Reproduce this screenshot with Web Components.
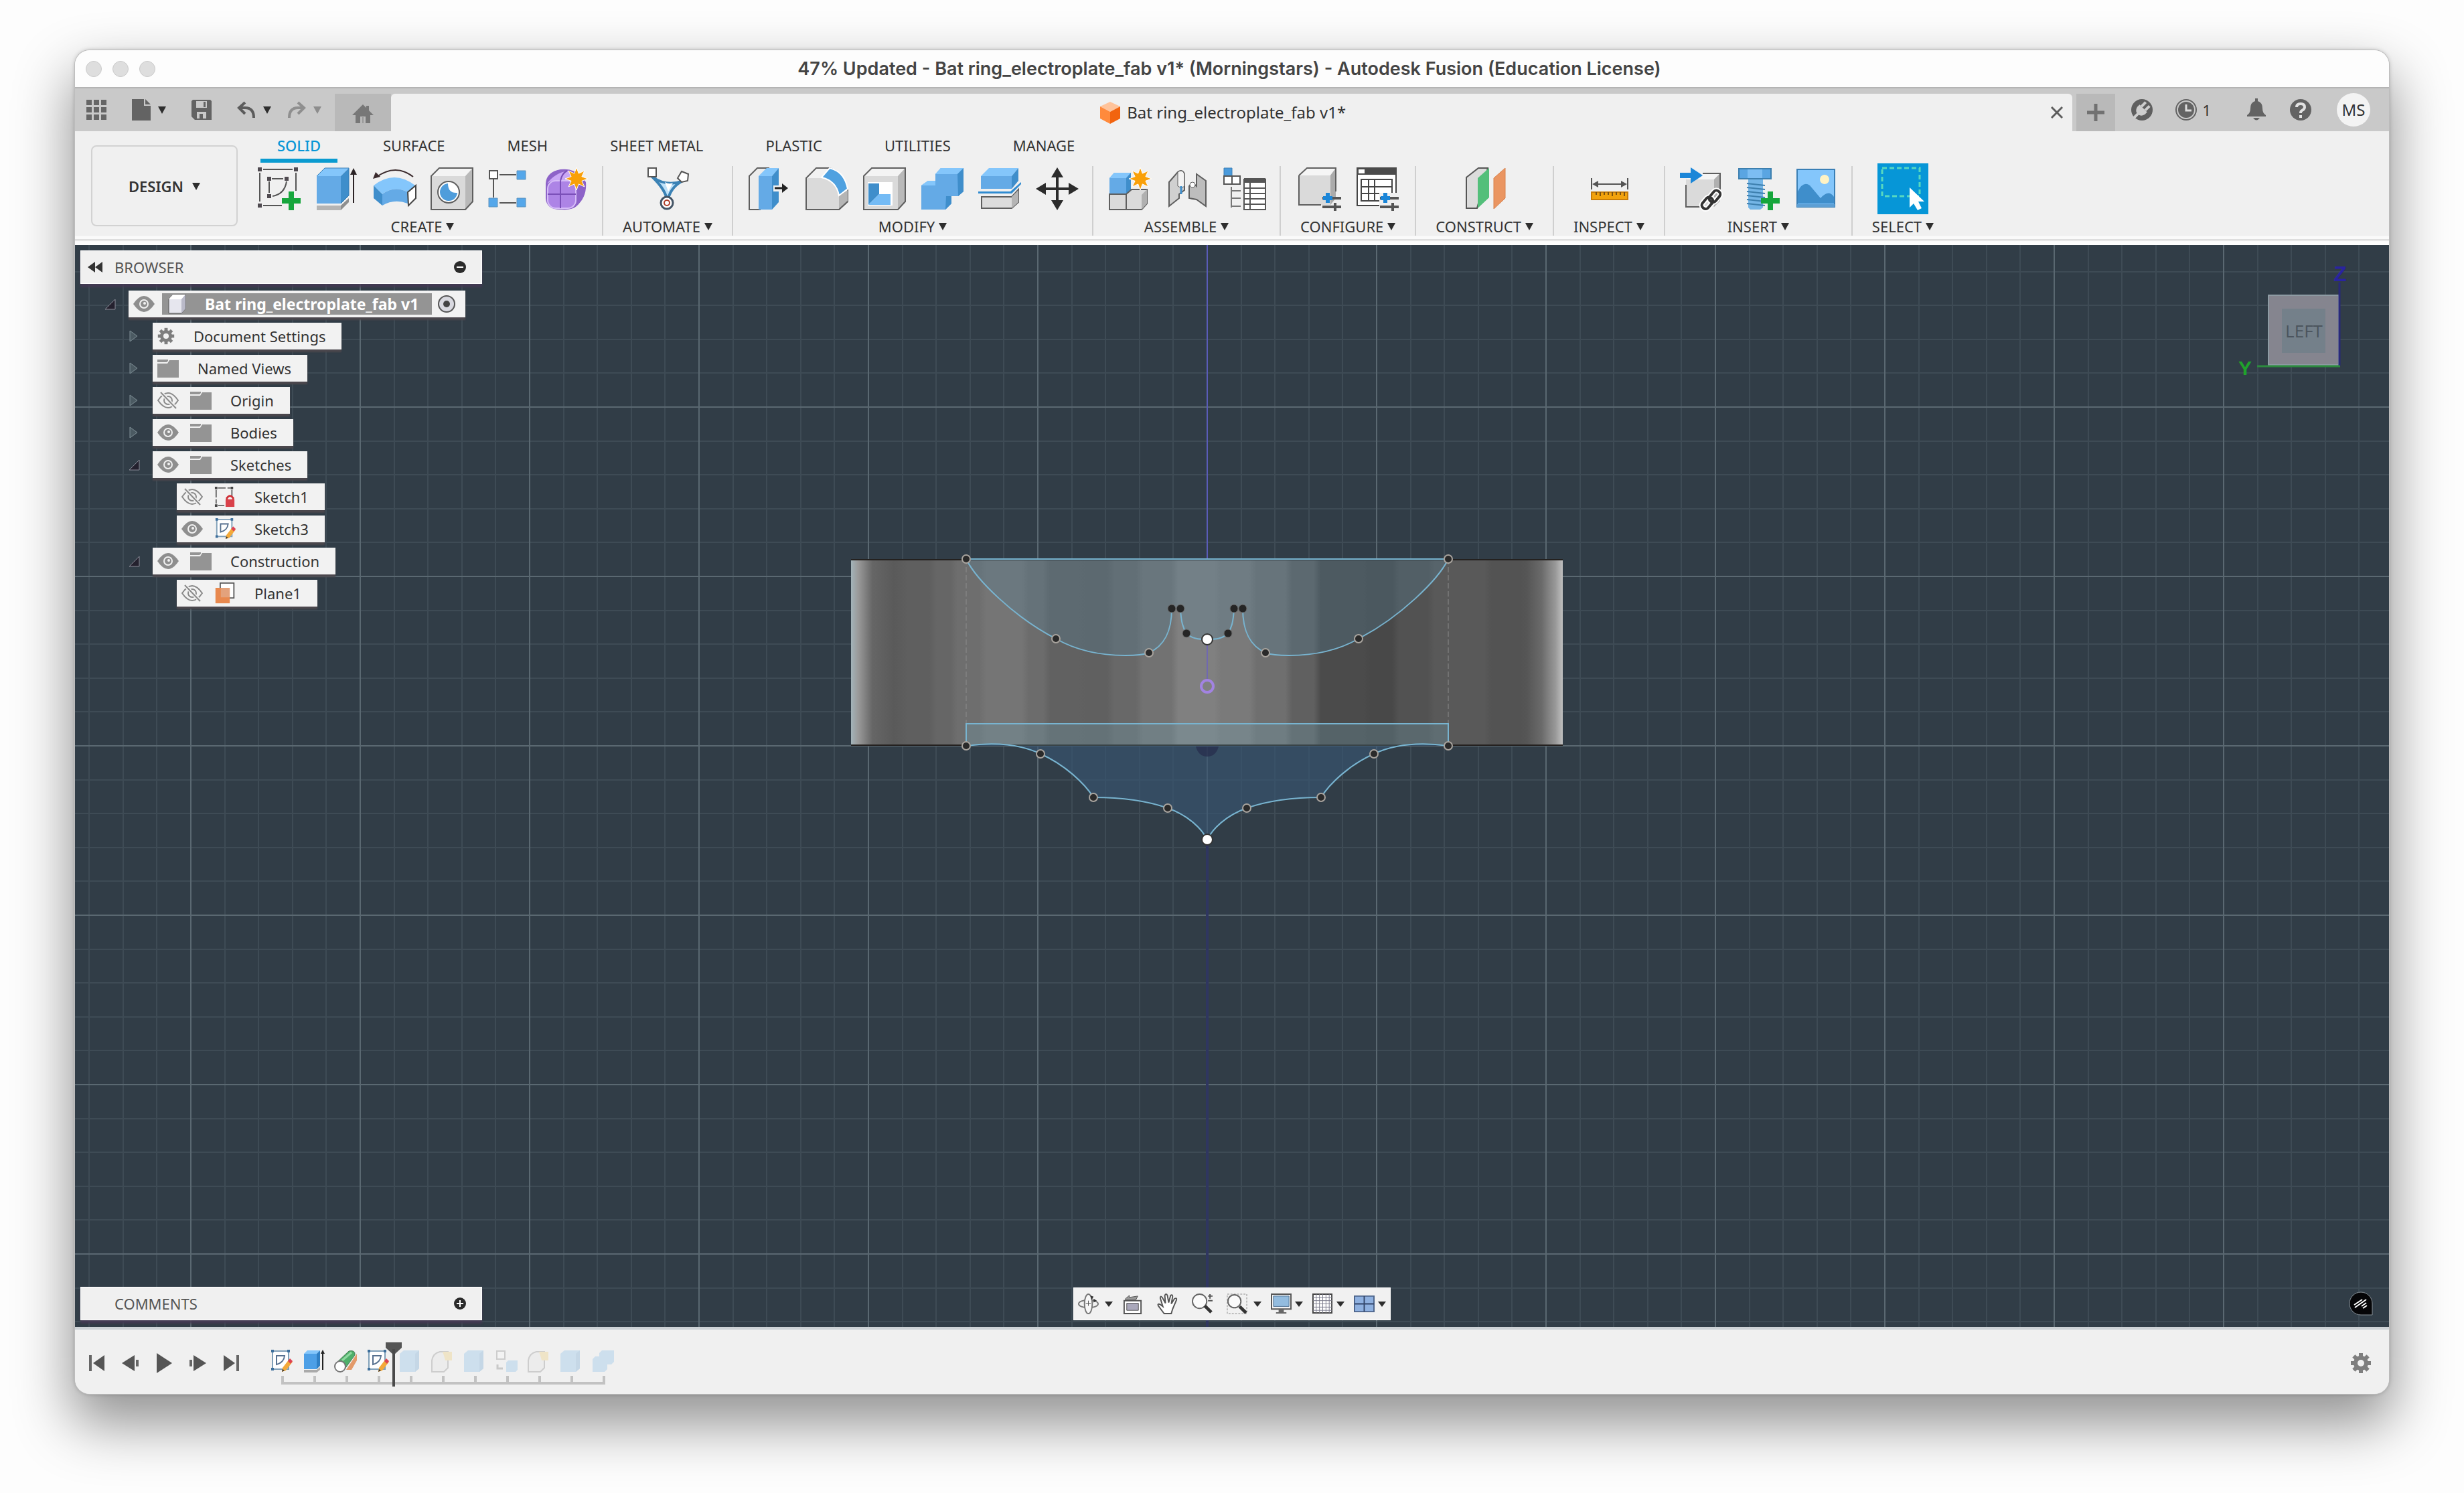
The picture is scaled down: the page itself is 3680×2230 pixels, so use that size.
<!DOCTYPE html>
<html lang="en">
<head>
<meta charset="utf-8">
<title>Autodesk Fusion</title>
<style>
  html, body { margin: 0; }
  body {
    box-sizing: border-box; min-height: 100vh; padding: 75px 112px 148px;
    display: flex; flex-direction: column; background: #fdfdfd; color: #333;
    font: 22px/26px "Noto Sans", "Open Sans", sans-serif;
  }
  fx-window { flex: 1; }
</style>
</head>
<body>
<fx-window>
  <fx-titlebar>47% Updated - Bat ring_electroplate_fab v1* (Morningstars) - Autodesk Fusion (Education License)</fx-titlebar>
  <fx-quickbar>Bat ring_electroplate_fab v1*</fx-quickbar>
  <fx-ribbon></fx-ribbon>
  <fx-viewport>
    <fx-browser slot="top"></fx-browser>
    <fx-viewcube slot="top"></fx-viewcube>
    <fx-panel slot="bottom" icon="plus-dot">COMMENTS</fx-panel>
    <fx-navbar slot="bottom"></fx-navbar>
    <fx-icon slot="bottom" name="badge"></fx-icon>
  </fx-viewport>
  <fx-timeline></fx-timeline>
</fx-window>

<script>
/* Faces of the solid that most ribbon icons share. */
const solid = (front, top, side, line) => `
  <path d="M1 13 13 1H63L52 13Z" fill="${top}"/><path d="M52 13 63 1V51L52 63Z" fill="${side}"/>
  <path d="M1 13H52V63H1Z" fill="${front}"/><path d="M1 13 13 1H63V51L52 63H1Z" fill="none" stroke="${line}" stroke-width="2"/>`;
const GREY = ['#dadada', '#f4f4f4', '#b9b9b9', '#5f5f5f'];
const star = (x, y, r) => {
  let d = '';
  for (let i = 0; i < 16; i++) {
    const a = i * Math.PI / 8, q = i % 2 ? r * .5 : r;
    d += (i ? 'L' : 'M') + (x + q * Math.sin(a)).toFixed(1) + ' ' + (y - q * Math.cos(a)).toFixed(1);
  }
  return `<path d="${d}Z" fill="#f9a009" stroke="#fff" stroke-width="1"/>`;
};
const gear = c => {
  let t = '';
  for (let i = 0; i < 8; i++) t += `<rect x="13" y="1" width="6" height="8" transform="rotate(${i * 45} 16 16)"/>`;
  return `<g fill="${c}">${t}<circle cx="16" cy="16" r="8" fill="none" stroke="${c}" stroke-width="6"/></g>`;
};
const pencilSketch = `
  <path d="M4 2H28V29H4Z" fill="#fff" stroke="#7f9fb8" stroke-width="2"/>
  <g fill="#3d6f9c"><path d="M2 0h4v4H2zM26 0h4v4h-4zM2 27h4v4H2z"/></g>
  <path d="M10 9H22Q21 19 10 22Z" fill="none" stroke="#56708f" stroke-width="2"/>
  <path d="M29 14l5 4-10 13-6 2 1-6Z" fill="#f3a93a"/><path d="M27 17l3-4 4 4-3 4Z" fill="#dd4152"/><path d="M18 33l1-4 3 2Z" fill="#333"/>`;
const sketchFrame = `
  <path d="M8 3H52M3 8V51M57 8V35M8 57H36M21 17H38M17 21V38" stroke="#555" stroke-width="2" fill="none"/>
  <path d="M43 21Q40 40 22 43" stroke="#555" stroke-width="2" fill="none"/>
  <path d="M0 0h6v6H0zM54 0h6v6h-6zM0 54h6v6H0zM14 14h6v6h-6zM40 14h6v6h-6zM14 40h6v6h-6z" fill="#4f4a50"/>`;
const greenPlus = (x, y) => `<path transform="translate(${x} ${y})" d="M-4-14h8v10h10v8H4v10h-8V4h-10v-8h10z" fill="#16a63c"/>`;
const slide = (x, y) => `
  <path d="M${x} ${y + 4}H${x + 28}M${x} ${y + 17}H${x + 28}" stroke="#555" stroke-width="4"/>
  <path d="M${x + 8} ${y - 4}V${y + 11}" stroke="#1b86d8" stroke-width="6"/><path d="M${x + 1} ${y + 4}H${x + 15}" stroke="#1b86d8" stroke-width="6"/>
  <path d="M${x + 19} ${y + 11}V${y + 23}" stroke="#555" stroke-width="4"/>`;

const ICONS = {
  caret: [12, 12, '<path d="M0 1H12L6 12Z" fill="#2e2e2e"/>'],
  'caret-dim': [12, 12, '<path d="M0 1H12L6 12Z" fill="#8d8d8d"/>'],
  'caret-flat': [12, 9, '<path d="M0 1H12L6 9Z" fill="#2e2e2e"/>'],
  grid: [30, 30, '<path fill="#666" d="M0 0h8v8H0zM11 0h8v8h-8zM22 0h8v8h-8zM0 11h8v8H0zM11 11h8v8h-8zM22 11h8v8h-8zM0 22h8v8H0zM11 22h8v8h-8zM22 22h8v8h-8z"/>'],
  file: [28, 32, '<path fill="#636363" d="M0 0H18V10H28V32H0ZM20 0 28 8H20Z"/>'],
  save: [30, 30, '<path fill="#636363" fill-rule="evenodd" d="M2 0H28L30 2V30H5L0 25V2ZM7 2V12H23V2ZM8 18V28H22V18Z"/><path d="M12 21h5v7h-5z" fill="#636363"/><path d="M18 3h3v8h-3z" fill="#636363"/>'],
  undo: [28, 26, '<path d="M12 2 3 10 12 19M3 10H12Q25 10 25 25" fill="none" stroke="#5c5c5c" stroke-width="4"/>'],
  redo: [28, 26, '<path d="M16 2 25 10 16 19M25 10H16Q3 10 3 25" fill="none" stroke="#8f8f8f" stroke-width="4"/>'],
  home: [32, 28, '<path fill="#777" d="M16 0 21 5V2H25V9L32 16H27V28H20V18H12V28H5V16H0Z"/><path d="M15 19h2v9h-2z" fill="#999"/>'],
  doc: [30, 33, '<path d="M15 0 30 7 15 15 0 7Z" fill="#ffc39a"/><path d="M0 7 15 15V33L0 25Z" fill="#ff8a3c"/><path d="M15 15 30 7V25L15 33Z" fill="#f2640f"/>'],
  close: [20, 20, '<path d="M2 2 18 18M18 2 2 18" stroke="#5e5e5e" stroke-width="3"/>'],
  add: [26, 26, '<path d="M13 0V26M0 13H26" stroke="#717171" stroke-width="5"/>'],
  plug: [32, 32, '<circle cx="16" cy="16" r="16" fill="#5f5f5f"/><g transform="rotate(45 16 16)" fill="#cdcdcd"><path d="M8 13H24V18Q22 25 16 25T8 18Z"/><path d="M10 4h4v9h-4zM18 4h4v9h-4zM14 24h4v10h-4z"/></g>'],
  clock: [32, 32, '<circle cx="16" cy="16" r="15" fill="none" stroke="#636363" stroke-width="2"/><circle cx="16" cy="16" r="12" fill="#636363"/><path d="M16 8V17H24" stroke="#ddd" stroke-width="3" fill="none"/>'],
  bell: [28, 34, '<path d="M12 0h4v4Q23 6 23 15Q23 22 28 25V27H0V25Q5 22 5 15Q5 6 12 4Z" fill="#636363"/><path d="M9 29H19Q14 36 9 29Z" fill="#636363"/>'],
  help: [32, 32, '<circle cx="16" cy="16" r="16" fill="#636363"/><path d="M10 12Q10 7 16 7T22 12Q22 15 18 17Q16 18 16 21" fill="none" stroke="#e2e2e2" stroke-width="4"/><path d="M14 24h4v4h-4z" fill="#e2e2e2"/>'],

  sketch: [64, 64, sketchFrame + greenPlus(50, 50)],
  extrude: [64, 64, '<path d="M2 13 14 1H50L38 13Z" fill="#84c6fb"/><path d="M38 13 50 1V42L38 54Z" fill="#3f8ecb"/><path d="M2 13H38V54H2Z" fill="#64aae6"/><path d="M2 13 14 1H50V42L38 54" fill="none" stroke="#3a7fb5" stroke-width="1"/><path d="M2 57H38V64H2Z" fill="#b4b4b4"/><path d="M38 57 50 46V52L38 64Z" fill="#8f8f8f"/><path d="M57 53V8" stroke="#2c2426" stroke-width="2"/><path d="M52 11 57 1 62 11Z" fill="#2c2426"/>'],
  revolve: [64, 64, '<path d="M6 14Q34-6 60 14" fill="none" stroke="#3a2a2c" stroke-width="2"/><path d="M0 17 4 7 11 14Z" fill="#3a2a2c"/><path d="M1 27Q32 3 63 27L52 37Q32 26 14 40Z" fill="#84c6fb"/><path d="M1 27 14 40V57L1 46Z" fill="#3f8ecb"/><path d="M14 40Q32 26 52 37V54Q32 46 14 57Z" fill="#64aae6"/><path d="M52 37 64 27V46L53 57Z" fill="#fff" stroke="#444" stroke-width="2"/>'],
  hole: [64, 64, solid(...GREY) + '<circle cx="27" cy="37" r="16" fill="#fff" stroke="#5f5f5f" stroke-width="2"/><path d="M26 24A13 13 0 1 0 40 38Q26 39 26 24Z" fill="#4f9ddb"/>'],
  pattern: [64, 64, '<path d="M17 11H42M8 18V45M17 53H42" stroke="#555" stroke-width="2"/><path d="M2 5h12v12H2z" fill="#fff" stroke="#555" stroke-width="2"/><g fill="#55a7ea" stroke="#5f93bd"><path d="M43 5h13v13H43zM1 46h13v13H1zM43 46h13v13H43z"/></g>'],
  form: [64, 64, '<path d="M0 24Q1 7 22 3Q46 0 60 22Q62 44 46 58Q40 64 24 63Q1 64 0 46Z" fill="#8d63c8"/><path d="M2 24Q14 8 34 5L46 20H10Z" fill="#c9a7f5"/><rect x="3" y="20" width="42" height="41" rx="12" fill="#ad84e6" stroke="#d6bdf8" stroke-width="2"/><path d="M22 20V61M3 40H45M22 20Q24 9 32 5" stroke="#7a4fb8" stroke-width="2" fill="none"/>' + star(46, 17, 17)],
  automate: [64, 64, '<path d="M8 14Q30 30 54 20Q34 30 31 52Q29 34 8 14Z" fill="#bfe2fa" stroke="#3b82b5" stroke-width="4" stroke-linejoin="round"/><path d="M27 22Q33 26 39 23L32 36Z" fill="#fff"/><path d="M2 1h12v13H2z" fill="#fff" stroke="#555" stroke-width="2"/><path d="M52 6 62 10 61 20 52 22 46 16Z" fill="#fff" stroke="#555" stroke-width="2"/><circle cx="30" cy="53" r="9" fill="#fff" stroke="#456" stroke-width="3"/><circle cx="30" cy="53" r="4" fill="none" stroke="#b0402c" stroke-width="2"/>'],
  press: [64, 64, '<path d="M2 13 14 1H30L18 13V63H2Z" fill="#ececec" stroke="#5f5f5f" stroke-width="2"/><path d="M16 13 28 1H46L36 13Z" fill="#84c6fb"/><path d="M36 13 46 1V52L36 63Z" fill="#3f8ecb"/><path d="M16 13H36V63H16Z" fill="#64aae6"/><path d="M38 27h10v9H38z" fill="#f0f0f0"/><path d="M40 31H56" stroke="#222" stroke-width="3"/><path d="M51 24 60 31 51 38Z" fill="#222"/>'],
  fillet: [64, 64, '<path d="M1 16 16 1H36Q58 8 63 34V51L50 63H1Z" fill="#f2f2f2" stroke="#5f5f5f" stroke-width="2"/><path d="M1 16H24Q46 20 50 42V63H1Z" fill="#dadada"/><path d="M50 42 63 34V51L50 63Z" fill="#b5b5b5"/><path d="M36 1Q58 6 63 32L50 42Q46 20 24 15Z" fill="#4fa1e0" stroke="#fff" stroke-width="2"/><path d="M1 16V63H50L63 51" fill="none" stroke="#5f5f5f" stroke-width="2"/>'],
  shell: [64, 64, solid(...GREY) + '<path d="M7 22H44V57H7Z" fill="#fff"/><path d="M8 24H24V40L8 56Z" fill="#3f8ecb"/><path d="M8 56 24 40H41V56Z" fill="#74bbf5"/>'],
  combine: [64, 64, '<path d="M1 27 11 20H22V10L30 1H64V36L56 43H46V54L37 63H1Z" fill="#64aae6"/><path d="M22 10 30 1H64L55 10ZM1 27 11 20H22V27Z" fill="#84c6fb"/><path d="M55 10 64 1V36L56 43ZM38 43H46V54L37 63Z" fill="#3f8ecb"/>'],
  replace: [64, 64, '<path d="M4 13 16 1H60L50 13Z" fill="#84c6fb"/><path d="M50 13 60 1V20L50 32Z" fill="#3f8ecb"/><path d="M4 13H50V32H4Z" fill="#64aae6"/><path d="M0 36H48L64 22V25L50 39H0Z" fill="#2f8bd0"/><path d="M5 44H50L60 33V52L50 61H5Z" fill="#dcdcdc" stroke="#5f5f5f" stroke-width="2"/><path d="M50 44V61L60 52V34Z" fill="#b5b5b5"/>'],
  move: [64, 64, '<path d="M32 8V56M8 32H56" stroke="#2c2c2c" stroke-width="4"/><path fill="#2c2c2c" d="M32 0 41 15H23ZM32 64 41 49H23ZM0 32 15 23V41ZM64 32 49 23V41Z"/>'],
  component: [64, 64, '<path d="M2 16 9 8H34V33L26 40H2Z" fill="#64aae6"/><path d="M2 16 9 8H34L27 16Z" fill="#84c6fb"/><path d="M27 16 34 8V33L27 40Z" fill="#3f8ecb"/><path d="M2 40H27V63H2ZM27 40 35 33H58V54L50 63H27Z" fill="#dadada" stroke="#5f5f5f" stroke-width="2"/><path d="M50 41 58 33V54L50 63Z" fill="#b0b0b0"/>' + star(48, 17, 17)],
  joint: [64, 64, '<path d="M5 22 18 7Q25 2 28 10V34L20 40V46L5 58Z" fill="#d0d0d0" stroke="#5f5f5f" stroke-width="2"/><path d="M18 7Q25 2 28 10V28Q24 32 18 28Z" fill="#f3f3f3" stroke="#5f5f5f"/><path d="M23 28V40" stroke="#3f8ecb" stroke-width="3"/><path d="M46 10 60 20V58L46 48L35 46V28Q40 22 46 28Z" fill="#bdbdbd" stroke="#5f5f5f" stroke-width="2"/><circle cx="40" cy="26" r="4" fill="#fff" stroke="#5f5f5f"/>'],
  bom: [64, 64, '<path d="M1 1h12v12H1z" fill="#4b9bdc" stroke="#3a7fb5"/><path d="M1 13h12v12H1zM13 13h12v12H13z" fill="#fff" stroke="#555" stroke-width="2"/><path d="M12 29V60M12 35H26M12 46H26M12 58H26" stroke="#777" stroke-width="2"/><path d="M31 18H63V63H31Z" fill="#fff" stroke="#555" stroke-width="2"/><path d="M31 16h32v7H31z" fill="#555"/><path d="M31 31H63M31 39H63M31 47H63M31 55H63M40 23V63" stroke="#555" stroke-width="2"/>'],
  config: [64, 64, '<path d="M1 12 13 1H56V46L48 56H1Z" fill="#dadada"/><path d="M1 12 13 1H56L48 12Z" fill="#f5f5f5"/><path d="M48 12 56 1V46L48 56Z" fill="#ababab"/><path d="M1 12 13 1H56V36M1 12V56H34" fill="none" stroke="#5f5f5f" stroke-width="2"/>' + slide(36, 42)],
  configTable: [64, 64, '<path d="M2 1H60V57H2Z" fill="#fff" stroke="#444" stroke-width="2"/><path d="M1 0h60v11H1z" fill="#4a4a4a"/><path d="M4 3h9v6H4z" fill="#fff"/><path d="M8 18H54V50H8ZM8 29H54M8 39H54M19 18V50M28 18V50" fill="none" stroke="#444" stroke-width="2"/><path d="M35 38h29v26H35z" fill="#f0f0f0"/>' + slide(36, 42)],
  plane: [64, 64, '<path d="M4 15 22 1H36L20 61H4Z" fill="#dcdcdc" stroke="#555" stroke-width="2"/><path d="M21 16 38 1V45L21 61Z" fill="#53bf7a"/><path d="M45 16 62 1V46L45 62Z" fill="#ea9561" stroke="#d8804b"/>'],
  measure: [64, 64, '<path d="M5 16V33M59 16V33M8 25H56" stroke="#555" stroke-width="2"/><path d="M6 25 15 20V30ZM58 25 49 20V30Z" fill="#555"/><path d="M5 37h54v11H5z" fill="#f2a20c" stroke="#c87d08" stroke-width="2"/><path d="M12 37v4M18 37v6M24 37v4M30 37v4M36 37v6M42 37v4M48 37v4M54 37v6" stroke="#7c5210" stroke-width="2"/>'],
  derive: [64, 64, '<path d="M9 18 18 9H60V50L51 59H9Z" fill="#dadada"/><path d="M9 18 18 9H60L51 18Z" fill="#f5f5f5"/><path d="M51 18 60 9V50L51 59Z" fill="#b0b0b0"/><path d="M9 26V59H32M34 9H60V38" fill="none" stroke="#5f5f5f" stroke-width="2"/><path d="M0 8H16V0L34 12 16 24V16H0Z" fill="#1b86d8"/><g fill="none" stroke="#fff" stroke-width="8"><rect x="32" y="48" width="19" height="11" rx="5" transform="rotate(-50 41 54)"/><rect x="43" y="38" width="19" height="11" rx="5" transform="rotate(-50 52 44)"/></g><g fill="none" stroke="#333" stroke-width="4"><rect x="32" y="48" width="19" height="11" rx="5" transform="rotate(-50 41 54)"/><rect x="43" y="38" width="19" height="11" rx="5" transform="rotate(-50 52 44)"/></g>'],
  screw: [64, 64, '<path d="M16 16H38V60L34 63H19L16 60Z" fill="#74b5e6"/><path d="M14 24 41 27M14 30 41 33M14 36 41 39M14 42 41 45M14 48 41 51M14 54 41 57" stroke="#3d7fae" stroke-width="2"/><path d="M2 2H50V17H2Z" fill="#5aa5e2" stroke="#3d7fae" stroke-width="2"/><path d="M15 3h22v13H15z" fill="#7cbdf2"/>' + greenPlus(49, 50)],
  image: [64, 64, '<path d="M3 3H59V59H3Z" fill="#84c6fb" stroke="#3a7fb5" stroke-width="2"/><circle cx="44" cy="18" r="7" fill="#fff3c4"/><path d="M4 36Q12 20 22 27L38 46Q50 32 58 44V54H4Z" fill="#3f8ecb"/><path d="M3 55h56v4H3z" fill="#5d9fd4"/>'],
  select: [64, 64, '<path d="M1 1H57V43H1Z" fill="none" stroke="#57d8c0" stroke-width="3" stroke-dasharray="7 4"/><path d="M42 30V60L48 54 54 64 60 61 55 51H64Z" fill="#fff"/>'],

  collapse: [22, 16, '<path d="M0 8 11 0V16ZM11 8 22 0V16Z" fill="#333"/>'],
  'minus-dot': [20, 20, '<circle cx="10" cy="10" r="9" fill="#2b2b2b"/><path d="M5 10H15" stroke="#fff" stroke-width="2"/>'],
  'plus-dot': [20, 20, '<circle cx="10" cy="10" r="9" fill="#2b2b2b"/><path d="M5 10H15M10 5V15" stroke="#fff" stroke-width="2"/>'],
  open: [18, 18, '<path d="M1 17H16V2Z" fill="#24212e" stroke="#8c8c98" stroke-width="1"/>'],
  shut: [18, 18, '<path d="M2 1V17L13 9Z" fill="#4b5a62" stroke="#7f8f96" stroke-width="1"/>'],
  eye: [32, 26, '<path d="M0 13Q16-11 32 13Q16 37 0 13Z" fill="#8e8e8e"/><circle cx="16" cy="13" r="6" fill="none" stroke="#f2f2f2" stroke-width="2"/><circle cx="17" cy="12" r="2" fill="#f2f2f2"/>'],
  'eye-off': [32, 26, '<path d="M1 13Q16-9 31 13Q16 35 1 13Z" fill="none" stroke="#8a8a8a" stroke-width="2"/><circle cx="16" cy="13" r="6" fill="none" stroke="#8a8a8a" stroke-width="2"/><path d="M5 1 28 25" stroke="#f0f0f0" stroke-width="5"/><path d="M5 1 28 25" stroke="#8a8a8a" stroke-width="2"/>'],
  folder: [32, 28, '<path d="M0 1H16V3L14 5H0ZM0 7H15L18 2H32V28H0Z" fill="#949494"/>'],
  gear: [32, 32, gear('#7e7e7e')],
  body: [28, 30, '<path d="M2 8 8 1H27V22L21 29H2Z" fill="#e6e6ee" stroke="#555" stroke-width="1"/><path d="M2 8 8 1H27L21 8Z" fill="#fff"/><path d="M21 8 27 1V22L21 29Z" fill="#b9b9c8"/>'],
  radio: [26, 26, '<circle cx="13" cy="13" r="12" fill="#d9d9e0" stroke="#555" stroke-width="2"/><circle cx="13" cy="13" r="5" fill="#444"/>'],
  locked: [34, 34, '<path d="M6 3H26M3 6V28M28 6V16M6 31H16" stroke="#666" stroke-width="2" stroke-dasharray="12 3"/><path d="M1 1h4v4H1zM26 1h4v4h-4zM1 29h4v4H1z" fill="#444"/><path d="M20 22V19Q25 12 30 19V22" fill="none" stroke="#cf2f36" stroke-width="3"/><path d="M18 21h14v12H18z" fill="#d9414a"/>'],
  pencil: [34, 34, pencilSketch],
  planeItem: [34, 36, '<path d="M9 1H32V26H9Z" fill="#fff" stroke="#555" stroke-width="2"/><path d="M1 9H25V35H1Z" fill="#e8884e"/><path d="M10 9H25V25H10Z" fill="#e3a27c"/>'],

  orbit: [32, 32, '<ellipse cx="16" cy="16" rx="15" ry="6" fill="none" stroke="#777" stroke-width="2"/><ellipse cx="16" cy="16" rx="6" ry="15" fill="#f7f7f7" stroke="#777" stroke-width="2"/><path d="M12 15H20M16 11V19" stroke="#555" stroke-width="1"/><path d="M19 3l5 2-3 5zM24 8l5 3-5 3z" fill="#333"/>'],
  look: [30, 32, '<path d="M2 11H28V31H2Z" fill="#fff" stroke="#555" stroke-width="2"/><path d="M6 15H24V26H6Z" fill="#aaa8bb" stroke="#555"/><path d="M4 8 10 3V6L23 4 20 10H4Z" fill="#999" stroke="#555"/>'],
  pan: [32, 32, '<path d="M11 31 2 19Q0 15 5 17L9 20 5 7Q5 3 8 6L13 15 12 3Q14-1 16 3L18 14 21 3Q24 1 24 5L22 16 27 8Q31 6 30 10L24 24 22 31Z" fill="#fff" stroke="#555" stroke-width="2"/>'],
  zoom: [32, 32, '<circle cx="12" cy="12" r="11" fill="#fafafa" stroke="#666" stroke-width="2"/><path d="M20 19 30 29" stroke="#333" stroke-width="5"/><path d="M25 4H32M28 1V8M25 11H32" stroke="#555" stroke-width="2"/>'],
  fit: [32, 32, '<path d="M1 1H31V31H1Z" fill="none" stroke="#888" stroke-width="1" stroke-dasharray="3 2"/><circle cx="12" cy="12" r="10" fill="#fafafa" stroke="#666" stroke-width="2"/><path d="M20 20 30 30" stroke="#333" stroke-width="5"/>'],
  display: [32, 32, '<path d="M1 1H31V24H1Z" fill="#f4f4f4" stroke="#555" stroke-width="2"/><path d="M4 4H28V20H4Z" fill="#93bcdf" stroke="#4c6f90"/><path d="M12 25h8v4h-8zM8 29h16v2H8z" fill="#666"/>'],
  gridview: [32, 32, '<path d="M1 1H30V30H1Z" fill="#fff" stroke="#444" stroke-width="2"/><path d="M1 6H30M1 11H30M1 16H30M1 21H30M1 26H30M6 1V30M11 1V30M16 1V30M21 1V30M26 1V30" stroke="#7c7c8c" stroke-width="1"/>'],
  views: [32, 32, '<path d="M1 4H31V28H1Z" fill="#8fb1e0" stroke="#4d648a" stroke-width="2"/><path d="M16 4V28M1 16H31" stroke="#33476b" stroke-width="2"/>'],
  badge: [36, 36, '<path d="M18 1A17 17 0 1 0 18 35H35V18A17 17 0 0 0 18 1Z" fill="#050507" stroke="#8a939a" stroke-width="1"/><path d="M8 20 20 12M9 24 26 12M19 22 26 17M21 25 27 21" stroke="#fff" stroke-width="2"/>'],

  first: [28, 30, '<path d="M4 3V27" stroke="#666" stroke-width="4"/><path d="M25 3V27L8 15Z" fill="#555"/>'],
  prev: [28, 30, '<path d="M20 3V27L1 15Z" fill="#555"/><path d="M24 10V20" stroke="#666" stroke-width="4"/>'],
  play: [28, 30, '<path d="M3 0V30L26 15Z" fill="#555"/>'],
  next: [28, 30, '<path d="M8 3V27L27 15Z" fill="#555"/><path d="M4 10V20" stroke="#666" stroke-width="4"/>'],
  last: [28, 30, '<path d="M24 3V27" stroke="#666" stroke-width="4"/><path d="M3 3V27L20 15Z" fill="#555"/>'],
  tExtrude: [34, 34, '<path d="M3 6 8 1H27L22 6Z" fill="#84c6fb"/><path d="M22 6 27 1V24L22 29Z" fill="#2f7fc4"/><path d="M3 6H22V29H3Z" fill="#4d9fe6"/><path d="M3 30H22L27 26V30L22 34H3Z" fill="#aaa"/><path d="M31 30V4" stroke="#222" stroke-width="2"/><path d="M28 6 31 0 34 6Z" fill="#222"/>'],
  tTube: [34, 34, '<path d="M18 30 34 6V16L26 30Z" fill="#e39a6a"/><path d="M3 20 22 2Q32 0 31 8L15 30Z" fill="#4fb06a" stroke="#4b7a56"/><path d="M12 16 26 4" stroke="#8fd8a0" stroke-width="3"/><circle cx="9" cy="25" r="8" fill="#fff" stroke="#777" stroke-width="2"/>'],
  tBlue: [34, 34, '<path d="M2 6 8 1H31V28L25 33H2Z" fill="#55a7e6"/><path d="M25 6 31 1V28L25 33Z" fill="#3283c4"/>'],
  tFillet: [34, 34, '<path d="M2 16Q4 5 14 3H26V27L20 33H2Z" fill="#e0e0e0" stroke="#555" stroke-width="2"/><path d="M18 3H32V16H22Q20 8 18 3Z" fill="#efbd3a"/>'],
  tPattern: [34, 34, '<path d="M3 2h12v12H3z" fill="#fff" stroke="#555" stroke-width="2"/><path d="M4 22V28H12" fill="none" stroke="#444" stroke-width="3"/><path d="M17 19 20 16H34V30L31 33H17Z" fill="#55a7e6"/>'],
  tCombine: [34, 34, '<path d="M2 14 6 10H12V5L16 1H34V18L30 22H24V29L20 33H2Z" fill="#55a7e6"/>'],
  marker: [26, 66, '<path d="M1 0H25V8L13 19 1 8Z" fill="#555"/><path d="M13 10V66" stroke="#4a4a4a" stroke-width="4"/>']
};

/* Base class: fills an open shadow root from styles() and render(). */
class FxElement extends HTMLElement {
  connectedCallback() {
    if (this.shadowRoot) return;
    const t = document.createElement('template');
    t.innerHTML = `<style>
      :host { display: block; box-sizing: border-box; }
      *, *::before { box-sizing: border-box; }
      button { font: inherit; color: inherit; background: none; border: 0; padding: 0; margin: 0; display: flex; align-items: center; }
      ul, ol { list-style: none; margin: 0; padding: 0; }
      ${this.styles()}</style>${this.render()}`;
    this.attachShadow({ mode: 'open' }).append(t.content.cloneNode(true));
  }
  styles() { return ''; }
  render() { return '<slot></slot>'; }
}
const icon = (name, w, h) => `<fx-icon name="${name}" ${w ? `w="${w}"` : ''} ${h ? `h="${h}"` : ''}></fx-icon>`;
const iconButton = (name, label, w, h) => `<button aria-label="${label}">${icon(name, w, h)}</button>`;

customElements.define('fx-icon', class extends FxElement {
  styles() { return ':host{display:block;flex:none} svg{display:block;overflow:visible}'; }
  render() {
    const [w, h, body] = ICONS[this.getAttribute('name')];
    return `<svg aria-hidden="true" viewBox="0 0 ${w} ${h}" width="${this.getAttribute('w') || w}" height="${this.getAttribute('h') || h}">${body}</svg>`;
  }
});

customElements.define('fx-window', class extends FxElement {
  styles() { return `:host{display:flex;flex-direction:column;border-radius:22px;overflow:hidden;background:#f0f0f0;
    box-shadow:0 0 0 1px #bdbdbd,0 0 6px rgba(0,0,0,.25),0 40px 84px 6px rgba(0,0,0,.42)}
    ::slotted(fx-viewport){flex:1}`; }
});

customElements.define('fx-titlebar', class extends FxElement {
  styles() { return `:host{display:grid;grid-template-columns:1fr auto 1fr;align-items:center;height:57px;padding:0 24px 0 16px;background:#fdfdfd;border-bottom:2px solid #b4b4b4;
    font:600 27px/30px Inter,"Liberation Sans",sans-serif;color:#444}
    .dots{display:flex;gap:16px}.dots i{width:24px;height:24px;border-radius:50%;background:#dedede;border:1px solid #c9c9c9}`; }
  render() { return '<div class="dots"><i></i><i></i><i></i></div><div><slot></slot></div>'; }
});

customElements.define('fx-quickbar', class extends FxElement {
  styles() { return `:host{display:flex;height:64px;background:#c9c9c9}
    .quick{display:flex;align-items:center;padding:0 14px 0 17px;width:388px}
    .quick button+button{margin-left:11px}
    .quick .wide{margin-left:38px}
    .quick .redo{margin-left:24px}
    .home{width:84px;margin-top:8px;padding-top:4px;justify-content:center;background:#b9b9b9}
    .tab{flex:1;display:flex;align-items:center;margin-top:8px;padding:0 13px 0 7px;border-radius:6px 6px 0 0;background:#f0f0f0;font-size:24px}
    .tab span{flex:1;display:flex;justify-content:center;align-items:center;gap:10px}
    .new{width:58px;margin:8px 0 0 6px;justify-content:center;background:#b9b9b9}
    .account{display:flex;align-items:center;padding:0 28px 0 24px}
    .jobs{margin-left:34px;gap:8px}.bell{margin-left:54px}.help{margin-left:36px}
    .me{margin-left:38px;width:50px;height:50px;border-radius:50%;background:#f3f3f3;justify-content:center;font-size:24px}`; }
  render() { return `
    <div class="quick">${iconButton('grid', 'Data panel')}
      <button class="wide" aria-label="File">${icon('file')}</button>${iconButton('caret', 'File menu')}
      <button class="wide" aria-label="Save">${icon('save')}</button>
      <button class="wide" aria-label="Undo">${icon('undo')}</button>${iconButton('caret', 'Undo history')}
      <button class="redo" aria-label="Redo">${icon('redo')}</button>${iconButton('caret-dim', 'Redo history')}
    </div>
    <button class="home" aria-label="Home">${icon('home')}</button>
    <div class="tab"><span>${icon('doc')}<slot></slot></span>${iconButton('close', 'Close tab')}</div>
    <button class="new" aria-label="New tab">${icon('add')}</button>
    <div class="account">${iconButton('plug', 'Extensions')}
      <button class="jobs" aria-label="Job status">${icon('clock')}1</button>
      <button class="bell" aria-label="Notifications">${icon('bell')}</button>
      <button class="help" aria-label="Help">${icon('help')}</button>
      <button class="me">MS</button></div>`; }
});

customElements.define('fx-tool-group', class extends FxElement {
  styles() { return `:host{display:flex;flex-direction:column;align-items:center;height:104px;padding-top:2px;border-right:2px solid #cfcfcf}
    :host([last]){border:0}
    .icons{display:flex;gap:22px;padding:0 20px 0 22px;margin-bottom:11px}
    :host([last]) .icons{padding:0;background:#0696d7;box-shadow:0 0 0 6px #0696d7}
    .label{gap:6px;padding:0 29px}`; }
  render() { return `<div class="icons">${this.getAttribute('icons').split(' ').map(n => iconButton(n, n, 64, 64)).join('')}</div>
    <button class="label"><slot></slot>${icon('caret')}</button>`; }
});

customElements.define('fx-ribbon', class extends FxElement {
  styles() { return `:host{display:flex;height:170px;background:linear-gradient(#f0f0f0 156px,#fafafa 157px,#fafafa 161px,#c8c8c8 162px,#fafafa 164px,#fff)}
    .design{width:219px;height:121px;margin:21px 0 0 24px;justify-content:center;gap:13px;border:2px solid #d2d2d2;border-radius:8px;font-weight:600}
    nav{display:flex;height:47px;gap:43px;padding-left:34px}
    nav button{justify-content:center;padding:1px 25px 0;border-bottom:6px solid transparent}
    nav button.on{color:#0696d7;border-color:#0a9bd0;font-weight:500}
    .groups{display:flex;margin-top:5px}
    .first{padding-left:8px}`; }
  render() {
    const tabs = ['SOLID', 'SURFACE', 'MESH', 'SHEET METAL', 'PLASTIC', 'UTILITIES', 'MANAGE'];
    const groups = [['CREATE', 'sketch extrude revolve hole pattern form'], ['AUTOMATE', 'automate'],
      ['MODIFY', 'press fillet shell combine replace move'], ['ASSEMBLE', 'component joint bom'],
      ['CONFIGURE', 'config configTable'], ['CONSTRUCT', 'plane'], ['INSPECT', 'measure'],
      ['INSERT', 'derive screw image'], ['SELECT', 'select']];
    return `<button class="design">DESIGN ${icon('caret')}</button>
      <div><nav>${tabs.map((t, i) => `<button${i ? '' : ' class="on"'}>${t}</button>`).join('')}</nav>
      <div class="groups">${groups.map(([t, n], i) => `<fx-tool-group icons="${n}"${i ? '' : ' class="first"'}${i === 8 ? ' last' : ''}>${t}</fx-tool-group>`).join('')}</div></div>`;
  }
});

customElements.define('fx-viewport', class extends FxElement {
  styles() { return `:host{position:relative;display:flex;flex-direction:column;justify-content:space-between;background:#313d47;overflow:hidden}
    .scene{position:absolute;inset:0;width:100%;height:100%}
    .top,.bottom{position:relative;display:flex;justify-content:space-between;padding:8px 58px 0 8px}
    .bottom{display:grid;grid-template-columns:1fr auto 1fr;align-items:center;padding:0 8px 10px}
    ::slotted(fx-icon){justify-self:end;margin-right:16px}`; }
  render() {
    /* Edges blend; the middle of the cylinder is faceted, so each colour holds until just before the next. */
    const edge = [[0, '#a3b3b9'], [1, '#9a9a9a'], [3, '#666'], [6, '#5a5a5a']];
    const facets = [[8, '#5f5f5f'], [12, '#666'], [15, '#6e6e6e'], [19, '#757575'], [25, '#6c6c6c'], [28, '#616161'], [33, '#606060'], [37, '#686868'], [41, '#727272'], [46, '#808080'], [52, '#7a7a7a'], [57, '#6f6f6f'], [62, '#606060'], [66, '#4b4b4b'], [73, '#484848'], [77, '#525252'], [82, '#595959'], [90, '#535353']];
    const rim = [[95, '#565656'], [97, '#6a6a6a'], [99, '#999'], [100, '#c0c0c0']];
    const held = facets.flatMap(([o, c], i) => [[o, c], [(facets[i + 1] || [95])[0] - 1, c]]);
    const stops = [...edge, ...held, ...rim];
    const minor = [51, 101, 152, 202].map(v => `M${v} 0V253M0 ${v}H253`).join('');
    const nodes = [[1443, 835], [1577, 954], [1716, 975], [1443, 1114], [1554, 1126], [1633, 1191], [1744, 1207]];
    const small = [[1750, 909], [1763, 909], [1772, 946]];
    const both = (list, r, extra) => list.flatMap(([x, y]) => [x, 3606 - x].map(v => `<circle cx="${v}" cy="${y}" r="${r}" ${extra}/>`)).join('');
    const upper = 'M1443 835C1458 866 1515 922 1577 954C1610 973 1645 979 1681 979C1697 979 1708 978 1716 975C1738 965 1750 945 1750 909';
    const inner = '1763 909C1764 930 1767 938 1772 946C1780 954 1790 955 1803 955';
    const lower = 'M1443 1114C1480 1109 1520 1110 1554 1126C1590 1142 1620 1170 1633 1191C1670 1191 1710 1195 1744 1207C1775 1218 1795 1238 1803 1254';
    return `<svg class="scene" viewBox="112 366 3456 1616" preserveAspectRatio="xMidYMid slice" role="img" aria-label="Model canvas">
      <defs>
        <pattern id="grid" x="1803" y="861" width="253" height="253" patternUnits="userSpaceOnUse">
          <path d="${minor}" stroke="#3e4b55" stroke-width="2"/>
          <path d="M0 0H253M0 0V253M253 0V253M0 253H253" stroke="#5a6871" stroke-width="2"/></pattern>
        <linearGradient id="metal">${stops.map(([o, c]) => `<stop offset="${o}%" stop-color="${c}"/>`).join('')}</linearGradient>
      </defs>
      <rect x="112" y="366" width="3456" height="1616" fill="url(#grid)"/>
      <path d="M1803 1254V1982" stroke="#2f3660" stroke-width="4"/>
      <path d="M1803 366V835" stroke="#5a5cb8" stroke-width="2"/>
      <rect x="1271" y="835" width="1063" height="279" fill="url(#metal)"/>
      <path d="M1271 836H2334M1271 1113H2334" stroke="#24211f" stroke-width="2"/>
      <g id="side">
        <path d="${upper}L${inner}V835Z" fill="#52809a" fill-opacity=".28"/>
        <path d="M1443 1081H1803V1114H1443Z" fill="#6fa0b4" fill-opacity=".28"/>
        <path d="${lower}V1114Z" fill="#385472" fill-opacity=".65"/>
        <path d="M1443 835V1081" stroke="#8b8b8b" stroke-width="1" stroke-dasharray="8 4"/>
        <path d="${upper}M${inner}${lower}M1443 1114V1081H1803M1443 835H1803" fill="none" stroke="#78b4d0" stroke-width="2"/>
      </g>
      <use href="#side" transform="translate(3606 0) scale(-1 1)"/>
      <path d="M1786 1115Q1790 1130 1803 1130T1820 1115Z" fill="#262c4c" opacity=".7"/>
      <path d="M1803 955V1015" stroke="#7068b0" stroke-width="2"/>
      ${both(nodes, 6, 'fill="#2a2a2a" stroke="#a9a49e" stroke-width="2"')}
      ${both(small, 6, 'fill="#252525" stroke="#6a6a6a" stroke-width="1"')}
      <circle cx="1803" cy="1025" r="9" fill="none" stroke="#a283e2" stroke-width="4"/>
      <g fill="#fff" stroke="#333" stroke-width="2"><circle cx="1803" cy="955" r="8"/><circle cx="1803" cy="1254" r="8"/></g>
    </svg>
    <div class="top"><slot name="top"></slot></div><div class="bottom"><slot name="bottom"></slot></div>`;
  }
});

customElements.define('fx-panel', class extends FxElement {
  styles() { return `:host{display:flex;align-items:center;width:600px;height:50px;padding:0 22px 0 10px;background:#f0f0f0;border:1px solid #fff;box-shadow:0 5px 3px rgba(70,56,84,.8);color:#555}
    .lead{width:40px}span{flex:1}`; }
  render() { return `<div class="lead">${this.hasAttribute('lead') ? iconButton('collapse', 'Collapse') : ''}</div><span><slot></slot></span>${iconButton(this.getAttribute('icon'), 'Toggle panel')}`; }
});

customElements.define('fx-tree-row', class extends FxElement {
  styles() {
    const level = +this.getAttribute('level');
    return `:host{display:flex;height:40px;margin-bottom:8px;padding-left:${36 + level * 36}px}
    .twist{width:36px;display:flex;align-items:center}
    .box{display:flex;align-items:center;background:#f2f2f2;padding:0 24px 0 7px;box-shadow:0 4px 2px #4b474d}
    .eye{margin-right:17px}.name{margin-left:28px}
    :host([root]) .box{padding-right:15px}
    :host([root]) .eye{margin-right:11px}
    .hl{display:flex;align-items:center;height:32px}
    :host([root]) .hl{background:#949494;color:#fff;font-size:23px;font-weight:700;padding:0 20px 0 8px;margin-right:9px}`;
  }
  render() {
    const a = n => this.getAttribute(n);
    const size = a('kind') === 'gear' ? [26, 26] : a('kind') === 'folder' ? [32, 28] : a('kind') === 'body' ? [28, 30] : [32, 32];
    return `<div class="twist">${a('twist') ? iconButton(a('twist'), 'Expand or collapse') : ''}</div>
      <div class="box">${a('eye') ? `<button class="eye" aria-label="Visibility">${icon(a('eye'))}</button>` : ''}
      <div class="hl">${icon(a('kind'), ...size)}<span class="name"><slot></slot></span></div>${this.hasAttribute('root') ? iconButton('radio', 'Activate') : ''}</div>`;
  }
});

customElements.define('fx-browser', class extends FxElement {
  styles() { return 'fx-panel{margin-bottom:10px}'; }
  render() {
    const rows = [[0, 'open', 'eye', 'body', 'Bat ring_electroplate_fab v1'], [1, 'shut', '', 'gear', 'Document Settings'], [1, 'shut', '', 'folder', 'Named Views'],
      [1, 'shut', 'eye-off', 'folder', 'Origin'], [1, 'shut', 'eye', 'folder', 'Bodies'], [1, 'open', 'eye', 'folder', 'Sketches'],
      [2, '', 'eye-off', 'locked', 'Sketch1'], [2, '', 'eye', 'pencil', 'Sketch3'], [1, 'open', 'eye', 'folder', 'Construction'], [2, '', 'eye-off', 'planeItem', 'Plane1']];
    return `<fx-panel lead icon="minus-dot">BROWSER</fx-panel>` + rows.map(([l, t, e, k, n]) =>
      `<fx-tree-row level="${l}" twist="${t}" eye="${e}" kind="${k}"${l ? '' : ' root'}>${n}</fx-tree-row>`).join('');
  }
});

customElements.define('fx-viewcube', class extends FxElement {
  styles() { return ':host{padding-top:16px} svg{display:block}'; }
  render() { return `<svg viewBox="0 0 170 175" width="170" height="175" font-family="Liberation Sans, sans-serif" role="img" aria-label="View cube">
    <rect x="48" y="51" width="105" height="104" fill="#85858f" stroke="#8e9ba3" stroke-width="2"/>
    <rect x="68" y="71" width="65" height="66" fill="#74808a"/>
    <text x="101" y="114" font-size="26" text-anchor="middle" fill="#4b545d" font-family="Open Sans, sans-serif">LEFT</text>
    <path d="M154 32V156" stroke="#29297a" stroke-width="3"/><path d="M31 157H155" stroke="#2c8a3f" stroke-width="3"/>
    <text x="155" y="30" font-size="32" font-weight="700" text-anchor="middle" fill="#2a24a0">Z</text>
    <text x="13" y="170" font-size="30" font-weight="700" text-anchor="middle" fill="#1fa32b">Y</text></svg>`; }
});

customElements.define('fx-navbar', class extends FxElement {
  styles() { return `:host{display:flex;align-items:center;gap:14px;height:49px;padding:0 6px;background:#f1f1f1;border:1px solid #fff}
    .plain{margin-right:7px}
    .menu{gap:9px}.tight{gap:5px}`; }
  render() {
    const menu = (n, l, c = '') => `<button class="menu ${c}" aria-label="${l}">${icon(n, 31, 31)}${icon('caret-flat')}</button>`;
    const plain = (n, l) => `<button class="plain" aria-label="${l}">${icon(n, 31, 31)}</button>`;
    return menu('orbit', 'Orbit') + plain('look', 'Look at') + plain('pan', 'Pan') + plain('zoom', 'Zoom') +
      menu('fit', 'Fit') + menu('display', 'Display settings', 'tight') + menu('gridview', 'Grid and snaps', 'tight') + menu('views', 'Viewports', 'tight');
  }
});

customElements.define('fx-timeline', class extends FxElement {
  styles() { return `:host{display:flex;height:100px;padding:0 26px 0 19px;border-top:4px solid #cdd2d6;background:#f0f0f0}
    .play{display:flex;align-items:center;gap:22px;padding-top:4px;margin-right:44px}
    ol{flex:1;display:flex;padding-top:30px}
    li{position:relative;width:48px}
    li fx-icon{margin-bottom:5px}
    .tick{display:block;width:48px;height:13px;margin-left:17px;border-left:4px solid #c2c2c2;border-bottom:4px solid #c2c2c2}
    li:last-child .tick{width:4px}
    .off>fx-icon{opacity:.22}
    .marker{position:absolute;top:-11px;left:-20px}
    .settings{padding-top:4px}`; }
  render() {
    const play = [['first', 'Go to start'], ['prev', 'Step back'], ['play', 'Play'], ['next', 'Step forward'], ['last', 'Go to end']];
    const items = ['pencil', 'tExtrude', 'tTube', 'pencil', 'tBlue', 'tFillet', 'tBlue', 'tPattern', 'tFillet', 'tBlue', 'tCombine'];
    return `<div class="play">${play.map(([n, l]) => iconButton(n, l)).join('')}</div>
      <ol>${items.map((n, i) => `<li class="${i > 3 ? 'off' : ''}">${icon(n, 34, 34)}<i class="tick"></i>${i === 4 ? `<div class="marker">${icon('marker')}</div>` : ''}</li>`).join('')}</ol>
      <button class="settings" aria-label="Settings">${icon('gear', 32, 32)}</button>`;
  }
});
</script>
</body>
</html>
